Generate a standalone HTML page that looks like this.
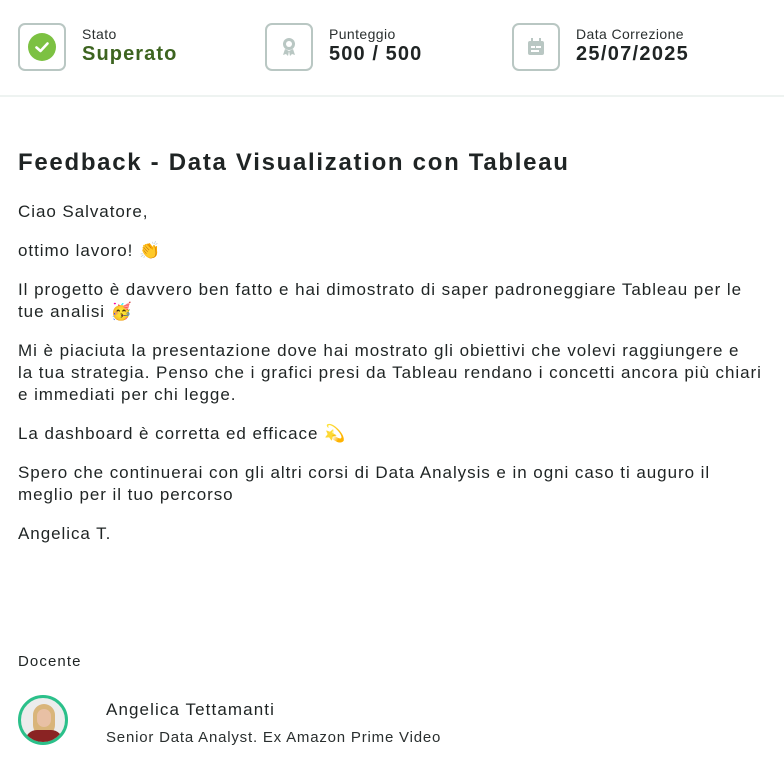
<!DOCTYPE html>
<html><head><meta charset="utf-8"><style>
body{margin:0;width:784px;height:760px;background:#fff;font-family:"Liberation Sans",sans-serif;color:#1f2424;overflow:hidden;position:relative}
.box{position:absolute;top:23px;width:44px;height:44px;border:2px solid #b9c7c3;border-radius:7px;display:flex;align-items:center;justify-content:center}
.lab{position:absolute;top:26px;font-size:14px;color:#2a2f2f;letter-spacing:0.4px}
.val{position:absolute;top:43px;font-size:20px;font-weight:bold;color:#1f2424;letter-spacing:1.1px}
.hr{position:absolute;top:95px;left:0;width:784px;height:2px;background:#eef3f1}
h1{position:absolute;left:18px;top:149px;margin:0;font-size:24px;font-weight:bold;color:#1f2424;letter-spacing:1.7px}
.body{position:absolute;left:18px;top:201px;width:758px;font-size:17px;line-height:22px;letter-spacing:0.95px}
.body p{margin:0 0 17px 0}
</style></head><body>
<div class="box" style="left:18px"><svg width="30" height="30" viewBox="0 0 30 30"><circle cx="15" cy="15" r="14" fill="#7cc142"/><path d="M9.5 15.5l4 3.5 7-7.5" stroke="#fff" stroke-width="2.6" fill="none" stroke-linecap="round" stroke-linejoin="round"/></svg></div>
<div class="lab" style="left:82px">Stato</div><div class="val" style="left:82px;color:#3d6420">Superato</div>
<div class="box" style="left:265px"><svg width="20" height="22" viewBox="0 0 20 22"><circle cx="10" cy="8" r="6" fill="#b9c7c3"/><circle cx="10" cy="8" r="3" fill="#fff"/><path d="M6 13l-2 6 3-1 2 2 1-5M14 13l2 6-3-1-2 2-1-5" fill="#b9c7c3"/></svg></div>
<div class="lab" style="left:329px">Punteggio</div><div class="val" style="left:329px">500 / 500</div>
<div class="box" style="left:512px"><svg width="20" height="20" viewBox="0 0 20 20"><rect x="2" y="4" width="16" height="14" rx="2" fill="#b9c7c3"/><rect x="5" y="1" width="2" height="4" fill="#b9c7c3"/><rect x="13" y="1" width="2" height="4" fill="#b9c7c3"/><rect x="5" y="9" width="4" height="2" fill="#fff"/><rect x="10" y="9" width="5" height="2" fill="#fff"/><rect x="5" y="13" width="8" height="2" fill="#fff"/></svg></div>
<div class="lab" style="left:576px">Data Correzione</div><div class="val" style="left:576px;letter-spacing:1.3px">25/07/2025</div>
<div class="hr"></div>
<h1>Feedback - Data Visualization con Tableau</h1>
<div class="body">
<p>Ciao Salvatore,</p>
<p>ottimo lavoro! 👏</p>
<p>Il progetto è davvero ben fatto e hai dimostrato di saper padroneggiare Tableau per le<br>tue analisi 🥳</p>
<p>Mi è piaciuta la presentazione dove hai mostrato gli obiettivi che volevi raggiungere e<br>la tua strategia. Penso che i grafici presi da Tableau rendano i concetti ancora più chiari<br>e immediati per chi legge.</p>
<p>La dashboard è corretta ed efficace 💫</p>
<p>Spero che continuerai con gli altri corsi di Data Analysis e in ogni caso ti auguro il<br>meglio per il tuo percorso</p>
<p>Angelica T.</p>
</div>
<div style="position:absolute;left:18px;top:653px;font-size:15px;letter-spacing:1.1px">Docente</div>
<div style="position:absolute;left:18px;top:695px;width:50px;height:50px;border:3px solid #2bc08a;border-radius:50%;box-sizing:border-box;background:#ececec;overflow:hidden">
<div style="position:absolute;left:12px;top:6px;width:22px;height:32px;border-radius:11px;background:#d9b57a"></div>
<div style="position:absolute;left:16px;top:11px;width:14px;height:18px;border-radius:7px;background:#e8c0a4"></div>
<div style="position:absolute;left:4px;top:32px;width:38px;height:20px;border-radius:12px 12px 0 0;background:#8a2323"></div></div>
<div style="position:absolute;left:106px;top:700px;font-size:17px;color:#1f2424;letter-spacing:1.1px">Angelica Tettamanti</div>
<div style="position:absolute;left:106px;top:729px;font-size:15px;color:#2a2f2f;letter-spacing:0.8px">Senior Data Analyst. Ex Amazon Prime Video</div>
</body></html>
